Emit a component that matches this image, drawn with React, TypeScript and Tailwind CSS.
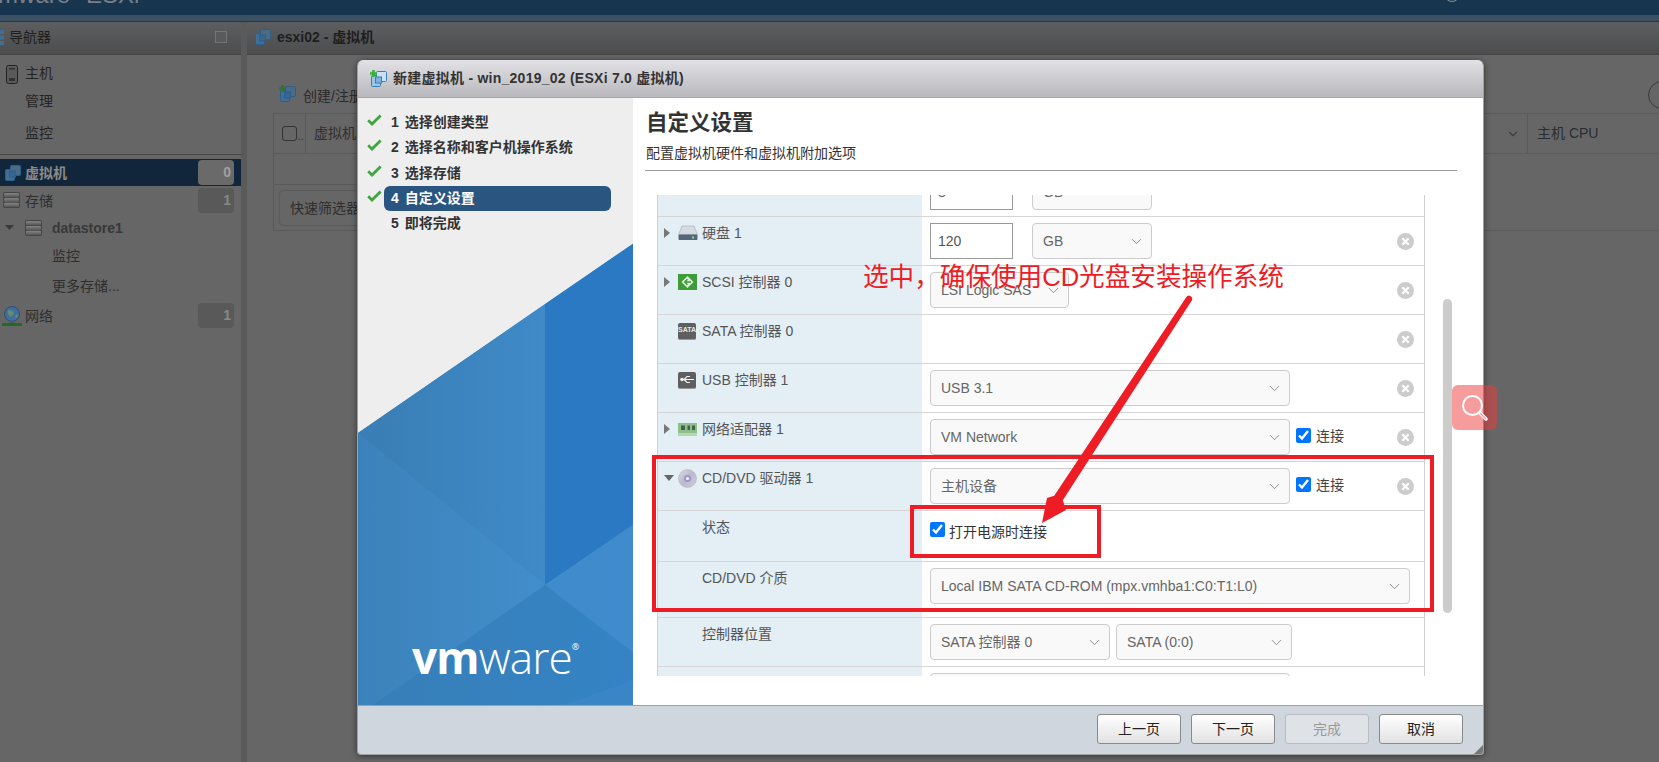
import type { ReactNode } from 'react';
import { ChevronDown } from 'lucide-react';

function VmIcon({ plus = false, size = 18 }: { plus?: boolean; size?: number }) {
  return (
    <svg width={size} height={size} viewBox="0 0 18 18" className="shrink-0">
      <rect x="1.5" y="5.5" width="9" height="11" rx="1" fill="#9cc6e8" stroke="#3d7fb5" />
      <rect x="6.5" y="1.5" width="10" height="10" rx="1" fill="#c9e1f4" stroke="#3d7fb5" />
      <rect x="5.5" y="7" width="6" height="6" fill="#7fb2dc" stroke="#3d7fb5" />
      {plus && <path d="M3.5 0v7M0 3.5h7" stroke="#3fae3f" strokeWidth="2.6" />}
    </svg>
  );
}

function DimVmIcon({ plus = false }: { plus?: boolean }) {
  return (
    <svg width="18" height="18" viewBox="0 0 18 18" className="shrink-0">
      <rect x="1.5" y="5.5" width="9" height="11" rx="1" fill="#3f6f96" stroke="#2d5f8a" />
      <rect x="6.5" y="1.5" width="10" height="10" rx="1" fill="#4a6b86" stroke="#2d5f8a" />
      <rect x="5.5" y="7" width="6" height="6" fill="#37658c" stroke="#2d5f8a" />
      {plus && <path d="M3.5 0v7M0 3.5h7" stroke="#2a7a2a" strokeWidth="2.6" />}
    </svg>
  );
}

function DbIcon() {
  return (
    <svg width="17" height="16" viewBox="0 0 17 16" className="shrink-0">
      <defs>
        <linearGradient id="dbBand" x1="0" x2="0" y1="0" y2="1">
          <stop offset="0" stopColor="#858585" />
          <stop offset="1" stopColor="#565656" />
        </linearGradient>
      </defs>
      <rect width="17" height="16" rx="2" fill="#454545" />
      <rect x="1" y="1" width="15" height="4.2" rx="1" fill="url(#dbBand)" />
      <rect x="1" y="5.9" width="15" height="4.2" rx="1" fill="url(#dbBand)" />
      <rect x="1" y="10.8" width="15" height="4.2" rx="1" fill="url(#dbBand)" />
    </svg>
  );
}

function Check() {
  return (
    <svg width="15" height="12" viewBox="0 0 15 12" className="block">
      <path d="M1.2 6.2l3.8 3.8L13.6 1.4" fill="none" stroke="#3da73d" strokeWidth="2.8" />
    </svg>
  );
}

function RemoveIcon() {
  return (
    <svg width="17" height="17" viewBox="0 0 17 17" className="block">
      <circle cx="8.5" cy="8.5" r="8.5" fill="#cccccc" />
      <path d="M5.3 5.3l6.4 6.4M11.7 5.3l-6.4 6.4" stroke="#ffffff" strokeWidth="2.2" />
    </svg>
  );
}

function Caret({ open = false }: { open?: boolean }) {
  return open ? (
    <svg width="10" height="6" viewBox="0 0 10 6" className="block">
      <path d="M0 0h10L5 6z" fill="#666666" />
    </svg>
  ) : (
    <svg width="6" height="10" viewBox="0 0 6 10" className="block">
      <path d="M0 0l6 5-6 5z" fill="#777777" />
    </svg>
  );
}

function DiskIcon() {
  return (
    <svg width="20" height="16" viewBox="0 0 20 16">
      <path d="M4 1h12l3.5 8.5H.5z" fill="#d5dbe0" stroke="#a9b2ba" strokeWidth="0.7" />
      <rect x="0.5" y="9.5" width="19" height="5.5" rx="1" fill="#55687a" />
      <rect x="14" y="11.5" width="2" height="2" fill="#9fd08a" />
    </svg>
  );
}

function ScsiIcon() {
  return (
    <svg width="19" height="16" viewBox="0 0 19 16">
      <rect width="19" height="16" fill="#3e9c3a" />
      <path d="M9.5 2l6 6-6 6-6-6z" fill="#dff2da" />
      <path d="M13 8H7M9.5 5.2L6.7 8l2.8 2.8" fill="none" stroke="#3e9c3a" strokeWidth="1.5" />
    </svg>
  );
}

function ChipIcon({ children }: { children: ReactNode }) {
  return (
    <div className="w-[18px] h-[17px] rounded-[2px] bg-[#5f5f5f] border-b border-[#999] flex items-center justify-center overflow-hidden">
      {children}
    </div>
  );
}

function NicIcon() {
  return (
    <svg width="19" height="13" viewBox="0 0 19 13">
      <rect width="19" height="10" fill="#8cc08c" />
      <rect y="10" width="19" height="3" fill="#b5d6a8" />
      <rect x="3" y="2.5" width="4" height="4.5" fill="#46604a" />
      <rect x="9.5" y="2.5" width="2.5" height="4.5" fill="#46604a" />
      <rect x="14" y="2.5" width="3" height="4.5" fill="#46604a" />
    </svg>
  );
}

function CdIcon() {
  return (
    <svg width="19" height="19" viewBox="0 0 19 19">
      <defs>
        <linearGradient id="cd" x1="0" y1="0" x2="1" y2="1">
          <stop offset="0" stopColor="#dcdce0" />
          <stop offset="0.5" stopColor="#bdb6cf" />
          <stop offset="1" stopColor="#d2d2d6" />
        </linearGradient>
      </defs>
      <circle cx="9.5" cy="9.5" r="9" fill="url(#cd)" stroke="#b0b0b8" strokeWidth="0.6" />
      <circle cx="9.5" cy="9.5" r="3.6" fill="#9a97cc" />
      <circle cx="9.5" cy="9.5" r="1.6" fill="#f3f3f6" />
    </svg>
  );
}

function Select({ text, w }: { text: string; w: string }) {
  return (
    <div className={`h-[36px] ${w} shrink-0 flex items-center justify-between pl-[10px] pr-[6px] rounded-[4px] border border-[#cccccc] bg-[#f9f9f9] text-[#666666]`}>
      <span className="whitespace-nowrap">{text}</span>
      <ChevronDown size={17} strokeWidth={1} color="#666666" />
    </div>
  );
}

function NumberBox({ value }: { value: string }) {
  return (
    <div className="h-[36px] w-[83px] shrink-0 flex items-center pl-[7px] border border-[#999999] bg-white text-[#555555]">
      {value}
    </div>
  );
}

function Connect() {
  return (
    <label className="ml-[6px] mt-[9px] flex items-center gap-[5px] h-[15px] text-[#444444]">
      <input type="checkbox" defaultChecked className="w-[15px] h-[15px] m-0 accent-[#0075ff]" />
      <span className="mt-px">连接</span>
    </label>
  );
}

function Remove() {
  return (
    <div className="ml-auto mr-[10px] mt-[10px]">
      <RemoveIcon />
    </div>
  );
}

function Row({
  h,
  label,
  caret,
  icon,
  children,
}: {
  h: string;
  label?: string;
  caret?: ReactNode;
  icon?: ReactNode;
  children?: ReactNode;
}) {
  return (
    <div className={`${h} flex border-b border-[#d5d5d5]`}>
      <div className="w-[264px] shrink-0 bg-[#e3eef5] flex pt-[7px] text-[#555555]">
        <div className="w-[20px] shrink-0 h-[18px] flex items-center pl-[6px]">{caret}</div>
        <div className="w-[24px] shrink-0 h-[18px] flex items-center">{icon}</div>
        <span className="leading-[18px] whitespace-nowrap">{label}</span>
      </div>
      <div className="flex-1 flex pl-[8px] pt-[6px]">{children}</div>
    </div>
  );
}

function NavBadge({ n, active = false }: { n: number; active?: boolean }) {
  return (
    <div className={`ml-auto mr-[7px] w-[36px] h-[25px] rounded-[4px] flex items-center justify-end pr-[3px] font-bold ${active ? 'bg-[#6a6a6a] text-[#a0a0a0]' : 'bg-[#595959] text-[#888888]'}`}>
      {n}
    </div>
  );
}

function WizardArt() {
  return (
    <svg width="276" height="462" viewBox="0 0 276 462" className="block mt-auto shrink-0">
      <defs>
        <linearGradient id="midBand" x1="0" x2="1" y1="0" y2="0">
          <stop offset="0" stopColor="#397eb4" />
          <stop offset="1" stopColor="#3f8ac8" />
        </linearGradient>
        <linearGradient id="lowBand" x1="0" x2="1" y1="0" y2="0">
          <stop offset="0" stopColor="#3c82ba" />
          <stop offset="0.7" stopColor="#428ecc" />
        </linearGradient>
        <linearGradient id="floor" x1="0" x2="1" y1="0" y2="0">
          <stop offset="0" stopColor="#377fb8" />
          <stop offset="1" stopColor="#3583c5" />
        </linearGradient>
      </defs>
      <path d="M0 190L276 0V462H0z" fill="url(#lowBand)" />
      <path d="M0 190L187 61V342z" fill="url(#midBand)" />
      <path d="M187 61L276 0V281L187 342z" fill="#2b79c2" />
      <path d="M187 342L276 281V410z" fill="#3f8bcb" />
      <path d="M187 342L15 462H276V410z" fill="url(#floor)" />
      <path d="M276 437L206 462H276z" fill="#3a85c6" />
    </svg>
  );
}

const steps = ['选择创建类型', '选择名称和客户机操作系统', '选择存储', '自定义设置', '即将完成'];

export default function App() {
  return (
    <div className="relative w-[1659px] h-[762px] overflow-hidden bg-[#5a5a5a] text-[14px] font-['Liberation_Sans','Noto_Sans_CJK_SC',sans-serif]">
      {/* top bar, cut off by the scroll position */}
      <div className="h-[15px] bg-[#17354f] overflow-hidden relative flex">
        <div className="-mt-[20px] -ml-[14px] h-[30px] leading-[30px] text-[24px] text-[#7a7f85] whitespace-nowrap">
          <span>vmware</span>
          <span className="ml-[16px]">ESXi</span>
        </div>
        <div className="ml-auto mr-[199px] -mt-[14px] w-[16px] h-[16px] rounded-full border border-[#8b8f94]" />
      </div>
      <div className="h-[6px] bg-[#3c5064]" />
      <div className="h-px bg-[#333333]" />

      <div className="flex h-[740px]">
        {/* navigator */}
        <aside className="w-[241px] shrink-0 bg-[#666666] rounded-t-[4px] overflow-hidden">
          <div className="h-[33px] flex items-center justify-between pr-[14px] pb-[2px] bg-gradient-to-b from-[#5d5e5f] to-[#4d4d4e] border-b border-[#454545] text-[#1e1e1e]">
            <div className="flex items-center">
              <svg width="4" height="16" viewBox="0 0 4 16" className="mr-[5px]">
                <rect x="-4" y="1" width="8" height="4" fill="#3f6f96" />
                <rect x="-4" y="6.5" width="8" height="4" fill="#3f6f96" />
                <rect x="-4" y="12" width="8" height="4" fill="#3f6f96" />
              </svg>
              <span>导航器</span>
            </div>
            <div className="w-[12px] h-[12px] border border-[#757575] bg-[#5a5a5a]" />
          </div>
          <div className="h-[100px] text-[#242424] pl-[25px] border-b border-[#454545]">
            <div className="h-[37px] flex items-center relative">
              <svg width="12" height="19" viewBox="0 0 12 19" className="absolute -left-[19px] top-[10px]">
                <rect x="0.5" y="0.5" width="11" height="18" rx="2" fill="#5a5a5a" stroke="#222222" />
                <rect x="3" y="3" width="6" height="1.5" fill="#333333" />
                <rect x="3" y="13" width="6" height="3" fill="#333333" />
              </svg>
              主机
            </div>
            <div className="h-[18px] flex items-center">管理</div>
            <div className="h-[44px] flex items-center pt-[3px]">监控</div>
          </div>
          <div className="pt-[4px] text-[#2e2e2e]">
            <div className="h-[27px] flex items-center bg-[#12263b] pl-[4px]">
              <DimVmIcon />
              <span className="ml-[3px] mt-[2px] font-bold text-[#8a8a8a]">虚拟机</span>
              <NavBadge n={0} active />
            </div>
            <div className="h-[28px] flex items-center pl-[3px]">
              <DbIcon />
              <span className="ml-[5px] mt-[2px]">存储</span>
              <NavBadge n={1} />
            </div>
            <div className="h-[27px] flex items-center pl-[5px]">
              <svg width="9" height="5" viewBox="0 0 9 5" className="mr-[11px]">
                <path d="M0 0h9L4.5 5z" fill="#3a3a3a" />
              </svg>
              <DbIcon />
              <span className="ml-[10px] mt-[2px] font-bold text-[#383838]">datastore1</span>
            </div>
            <div className="h-[29px] flex items-center pl-[52px] pt-[2px]">监控</div>
            <div className="h-[30px] flex items-center pl-[52px] pt-[2px]">更多存储...</div>
            <div className="h-[31px] flex items-center pl-[2px]">
              <svg width="20" height="20" viewBox="0 0 20 20">
                <circle cx="10" cy="8" r="7.5" fill="#3f6f9e" stroke="#2d4f70" />
                <path d="M6 4l5 1 1 3-4 3-2-3zM13 10l2-2 1 2-2 2z" fill="#6a8a6a" />
                <rect x="8" y="15" width="4" height="2" fill="#555555" />
                <rect y="17" width="20" height="3" fill="#226b22" />
              </svg>
              <span className="ml-[3px] mt-[2px]">网络</span>
              <NavBadge n={1} />
            </div>
          </div>
        </aside>

        {/* main panel behind the dialog */}
        <main className="ml-[6px] flex-1 bg-[#666666] rounded-t-[4px] overflow-hidden">
          <div className="h-[33px] flex items-center pl-[7px] pb-[2px] bg-gradient-to-b from-[#5d5e5f] to-[#4d4d4e] border-b border-[#454545] text-[#1e1e1e] font-bold">
            <DimVmIcon />
            <span className="ml-[5px]">esxi02 - 虚拟机</span>
          </div>
          <div className="h-[58px] flex pl-[32px] pt-[30px] text-[#2a2a2a] relative">
            <DimVmIcon plus />
            <span className="ml-[6px] mt-[1px]">创建/注册虚拟机</span>
            <div className="absolute right-[-17px] top-[26px] w-[28px] h-[28px] rounded-full border border-[#3a3a3a]" />
          </div>
          <div className="ml-[26px] h-[118px] border border-[#5a5a5a] border-r-0">
            <div className="h-[40px] flex items-center border-b border-[#5a5a5a] text-[#2e2e2e]">
              <div className="w-[32px] h-full flex items-center pl-[8px] border-r border-[#5a5a5a]">
                <div className="w-[15px] h-[15px] rounded-[3px] border border-[#333333] shrink-0" />
                <span className="ml-px text-[10px] mt-[6px]">..</span>
              </div>
              <span className="ml-[8px]">虚拟机</span>
              <ChevronDown size={14} strokeWidth={2} color="#3e3e3e" className="ml-[1150px]" />
              <div className="ml-[7px] h-full border-l border-[#5a5a5a] pl-[9px] flex items-center text-[#282d33]">主机 CPU</div>
            </div>
            <div className="h-[31px] border-b border-[#5a5a5a] w-[200px]" />
            <div className="pl-[5px] pt-[5px]">
              <div className="w-[120px] h-[36px] rounded-[4px] border border-[#5a5a5a] pl-[10px] flex items-center text-[#2e2e2e]">快速筛选器</div>
            </div>
          </div>
        </main>
      </div>

      {/* new vm wizard */}
      <div className="absolute left-[357px] top-[60px] w-[1127px] h-[695px] flex flex-col rounded-t-[6px] rounded-b-[4px] overflow-hidden border-l border-r border-b border-[#a0a0a0] shadow-[0_1px_6px_rgba(0,0,0,0.5)]">
        <div className="h-[38px] shrink-0 flex items-center pl-[12px] gap-[5px] bg-gradient-to-b from-[#e2e2e6] to-[#b9b9bd] border-b border-[#a8a8ac] font-bold tracking-[0.25px] text-[#333333]">
          <VmIcon plus />
          <span>新建虚拟机 - win_2019_02 (ESXi 7.0 虚拟机)</span>
        </div>
        <div className="h-[607px] shrink-0 flex">
          <div className="relative w-[275px] shrink-0 bg-[#eeeeee] flex flex-col overflow-hidden">
            <div className="pt-[12px]">
              {steps.map((step, i) => (
                <div key={step} className="h-[25.3px] flex items-center">
                  <div className="w-[26px] pl-[9px] -mt-[5px]">{i < 4 && <Check />}</div>
                  <div className={`w-[227px] h-[25px] rounded-[6px] pl-[7px] flex items-center font-bold ${i === 3 ? 'bg-[#2a5580] text-white' : 'text-[#333333]'}`}>
                    <span className="mr-[6px]">{i + 1}</span>
                    {step}
                  </div>
                </div>
              ))}
            </div>
            <WizardArt />
            <div className="absolute left-[54px] bottom-[28px] h-[40px] leading-[40px] text-white text-[44px] tracking-[-0.8px] font-['Open_Sans',sans-serif] whitespace-nowrap flex">
              <span className="font-bold">vm</span>
              <span className="font-light">ware</span>
              <span className="text-[9px] leading-[20px] tracking-normal">®</span>
            </div>
          </div>

          <div className="flex-1 bg-white flex flex-col">
            <h2 className="mt-[10px] ml-[13px] h-[30px] leading-[30px] text-[21.5px] font-bold text-[#333333]">自定义设置</h2>
            <p className="mt-[5px] ml-[13px] h-[20px] leading-[20px] text-[#333333]">配置虚拟机硬件和虚拟机附加选项</p>
            <div className="mt-[7px] ml-[12px] w-[812px] h-px bg-[#999999]" />
            <div className="mt-[24px] ml-[24px] flex h-[481px]">
              <div className="w-[768px] shrink-0 border-l border-r border-[#d0d0d0] overflow-hidden">
                <div className="-mt-[27px]">
                  <Row h="h-[49px]">
                    <NumberBox value="8" />
                    <div className="ml-[19px]"><Select text="GB" w="w-[120px]" /></div>
                  </Row>
                  <Row h="h-[49px]" label="硬盘 1" caret={<Caret />} icon={<DiskIcon />}>
                    <NumberBox value="120" />
                    <div className="ml-[19px]"><Select text="GB" w="w-[120px]" /></div>
                    <Remove />
                  </Row>
                  <Row h="h-[49px]" label="SCSI 控制器 0" caret={<Caret />} icon={<ScsiIcon />}>
                    <Select text="LSI Logic SAS" w="w-[139px]" />
                    <Remove />
                  </Row>
                  <Row
                    h="h-[49px]"
                    label="SATA 控制器 0"
                    icon={<ChipIcon><span className="text-[7px] font-bold text-[#e8e8e8]">SATA</span></ChipIcon>}
                  >
                    <Remove />
                  </Row>
                  <Row
                    h="h-[49px]"
                    label="USB 控制器 1"
                    icon={
                      <ChipIcon>
                        <svg width="15" height="9" viewBox="0 0 15 9">
                          <path d="M1 4.5h13M4 4.5l3-3h3M4 4.5l3 3h3" fill="none" stroke="#f0f0f0" strokeWidth="1.2" />
                          <circle cx="2" cy="4.5" r="1.8" fill="#f0f0f0" />
                        </svg>
                      </ChipIcon>
                    }
                  >
                    <Select text="USB 3.1" w="w-[360px]" />
                    <Remove />
                  </Row>
                  <Row h="h-[49px]" label="网络适配器 1" caret={<Caret />} icon={<NicIcon />}>
                    <Select text="VM Network" w="w-[360px]" />
                    <Connect />
                    <Remove />
                  </Row>
                  <Row h="h-[49px]" label="CD/DVD 驱动器 1" caret={<Caret open />} icon={<CdIcon />}>
                    <Select text="主机设备" w="w-[360px]" />
                    <Connect />
                    <Remove />
                  </Row>
                  <Row h="h-[51px]" label="状态">
                    <label className="mt-[5px] flex items-center gap-[4px] h-[15px] text-[#333333]">
                      <input type="checkbox" defaultChecked className="w-[15px] h-[15px] m-0 accent-[#0075ff]" />
                      <span className="mt-[5px]">打开电源时连接</span>
                    </label>
                  </Row>
                  <Row h="h-[56px]" label="CD/DVD 介质">
                    <Select text="Local IBM SATA CD-ROM (mpx.vmhba1:C0:T1:L0)" w="w-[480px]" />
                  </Row>
                  <Row h="h-[49px]" label="控制器位置">
                    <Select text="SATA 控制器 0" w="w-[180px]" />
                    <div className="ml-[6px]"><Select text="SATA (0:0)" w="w-[176px]" /></div>
                  </Row>
                  <Row
                    h="h-[49px]"
                    icon={<div className="w-[19px] h-[18px] mt-[8px] border border-[#5d6d80] bg-[#eef2f6]" />}
                  >
                    <Select text="" w="w-[360px]" />
                  </Row>
                </div>
              </div>
              <div className="ml-[18px] mt-[104px] w-[9px] h-[314px] rounded-full bg-[#cccccc]" />
            </div>
          </div>
        </div>
        <div className="relative flex-1 bg-[#d0d6de] border-t border-[#a0a0a0] flex justify-end items-start pt-[8px] pr-[20px] gap-[10px] text-[#222222]">
          {['上一页', '下一页', '完成', '取消'].map((label) => (
            <button
              key={label}
              className={`w-[84px] h-[30px] rounded-[3px] border ${label === '完成' ? 'border-[#b8bcc2] bg-[#dfe3e8] text-[#999999]' : 'border-[#8a8a8a] bg-gradient-to-b from-white to-[#e2e2e2]'}`}
            >
              {label}
            </button>
          ))}
          <svg width="9" height="9" viewBox="0 0 9 9" className="absolute right-0 bottom-0">
            <path d="M9 0v9H0z" fill="#777777" />
          </svg>
        </div>
      </div>

      {/* screenshot annotations */}
      <div className="absolute left-[863px] top-[261px] h-[32px] leading-[32px] text-[25.6px] text-[#ee1c25] whitespace-nowrap">
        选中，确保使用CD光盘安装操作系统
      </div>
      <div className="absolute left-[652px] top-[455px] w-[782px] h-[157px] border-4 border-[#ee1c25]" />
      <div className="absolute left-[910px] top-[505px] w-[191px] h-[53px] border-4 border-[#ee1c25]" />
      <svg width="1659" height="762" viewBox="0 0 1659 762" className="absolute left-0 top-0 pointer-events-none">
        <path
          d="M1186.2 297.2a3.2 3.2 0 0 1 5.4 3.6L1062.8 500.2L1066 510L1042 523L1047 498L1054.2 495.8z"
          fill="#ee1c25"
        />
      </svg>

      {/* floating search button */}
      <div className="absolute left-[1452px] top-[385px] w-[45px] h-[45px] rounded-[6px] bg-[#ee3a3a]/50 flex items-center justify-center">
        <svg width="28" height="28" viewBox="0 0 28 28">
          <circle cx="11.5" cy="11.5" r="9.5" fill="none" stroke="#ffffff" strokeWidth="2" />
          <path d="M19 19l6 6" stroke="#ffffff" strokeWidth="3.6" strokeLinecap="round" />
          <path d="M19.5 19.5l5 5" stroke="#f59a9a" strokeWidth="1.2" strokeLinecap="round" />
        </svg>
      </div>
    </div>
  );
}
